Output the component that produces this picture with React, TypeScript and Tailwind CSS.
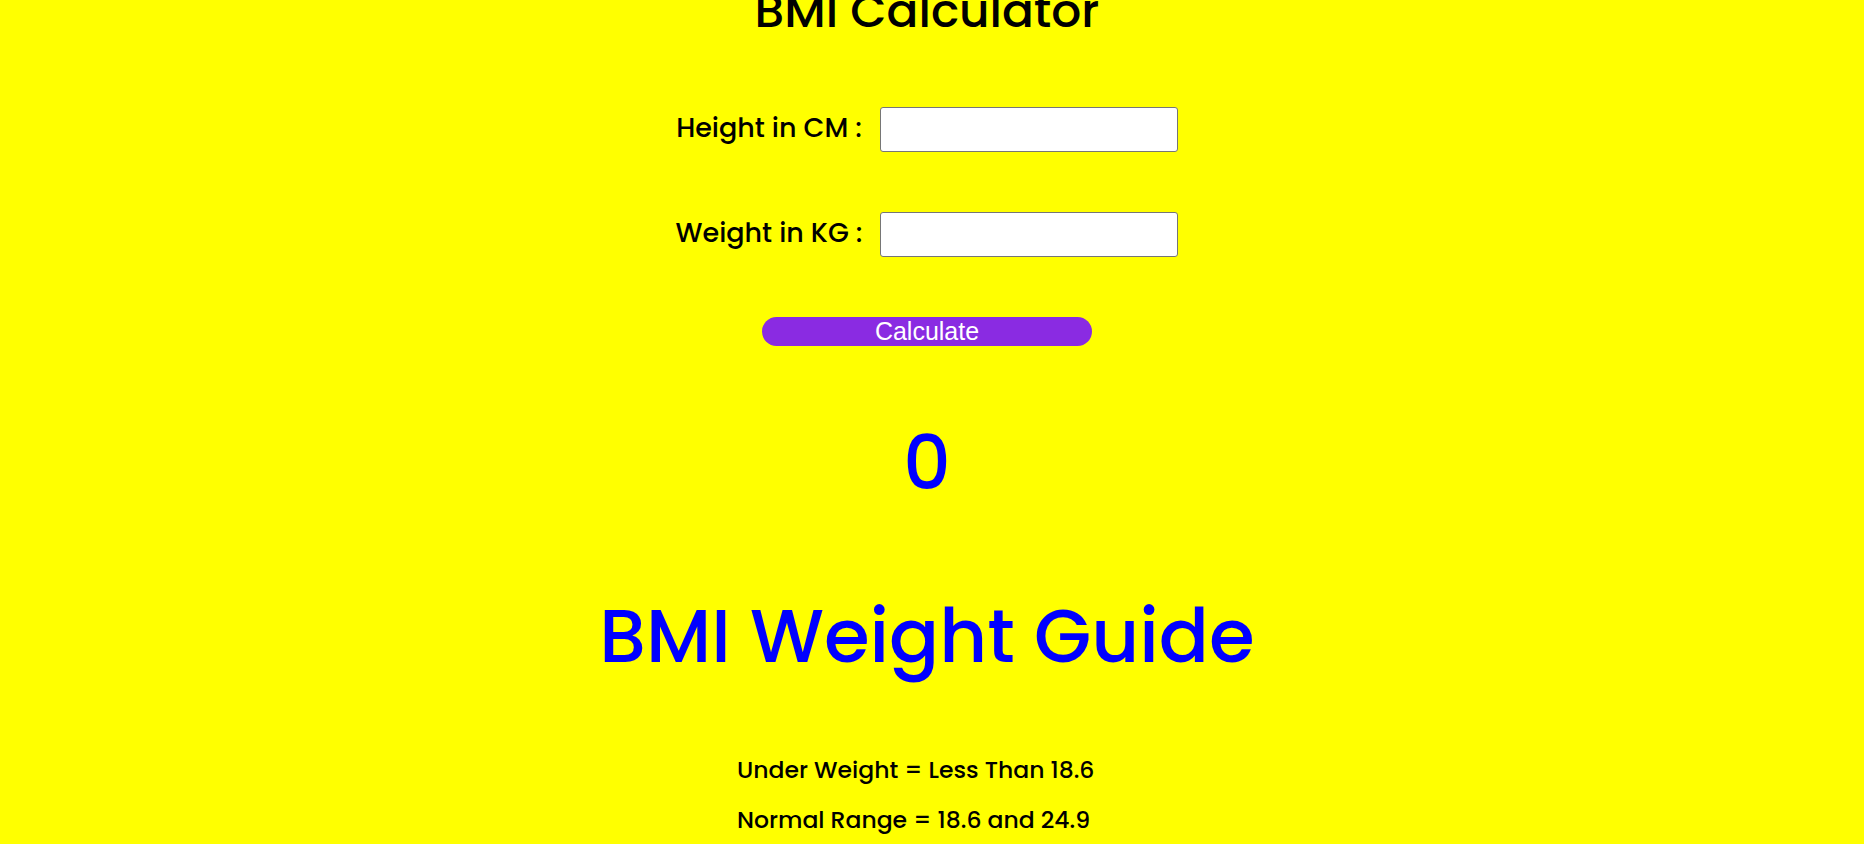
import { useState } from 'react';

const font = { fontFamily: 'Poppins, Inter, "Noto Sans", sans-serif' };

const guide = ['Under Weight = Less Than 18.6', 'Normal Range = 18.6 and 24.9'];

export default function App() {
  const [height, setHeight] = useState('');
  const [weight, setWeight] = useState('');
  const [bmi, setBmi] = useState(0);

  const calculate = () => {
    const h = parseFloat(height) / 100;
    const w = parseFloat(weight);
    if (!h || !w) return setBmi(0);
    setBmi(Math.round((w / (h * h)) * 10) / 10);
  };

  return (
    <main
      className="h-screen overflow-hidden bg-[#ffff00] pr-[10px] flex flex-col items-center text-black font-medium"
      style={font}
    >
      <h1 className="mt-[-17px] text-[47px] leading-[56px] font-medium">BMI Calculator</h1>

      {/* Inputs */}
      <div className="mt-[68px] flex items-center gap-[18px]">
        <label className="mb-[4px] text-[27px] leading-[32px]">Height in CM :</label>
        <input
          type="number"
          value={height}
          onChange={(e) => setHeight(e.target.value)}
          className="w-[298px] h-[45px] bg-white border border-[#767676] rounded-[3px] px-2 outline-none"
        />
      </div>
      <div className="mt-[60px] flex items-center gap-[18px]">
        <label className="mb-[4px] text-[27px] leading-[32px]">Weight in KG :</label>
        <input
          type="number"
          value={weight}
          onChange={(e) => setWeight(e.target.value)}
          className="w-[298px] h-[45px] bg-white border border-[#767676] rounded-[3px] px-2 outline-none"
        />
      </div>

      <button
        onClick={calculate}
        className="mt-[60px] w-[330px] h-[29px] rounded-full bg-[#8a2be2] text-white text-[25px] leading-[29px] font-normal font-['Liberation_Sans',Arial,sans-serif]"
      >
        Calculate
      </button>

      {/* Result */}
      <div className="mt-[80px] text-[74px] leading-[74px] text-[#0000ff]">{bmi}</div>

      <h2 className="mt-[99px] text-[74px] leading-[74px] text-[#0000ff] font-medium">BMI Weight Guide</h2>

      <div className="mt-[72px] w-[380px] text-left">
        {guide.map((line) => (
          <p key={line} className="text-[23.5px] leading-[50px]">
            {line}
          </p>
        ))}
      </div>
    </main>
  );
}
